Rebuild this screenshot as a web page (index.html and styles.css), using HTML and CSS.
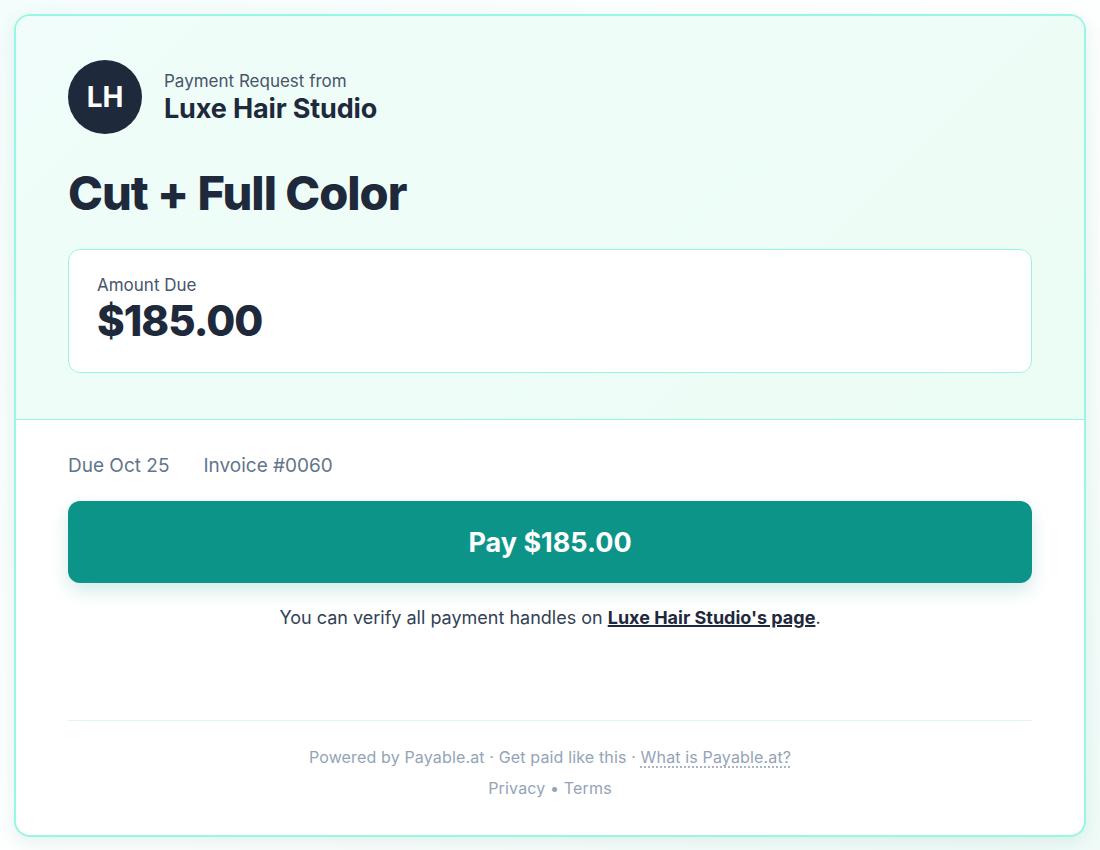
FILE: index.html
```html
<!DOCTYPE html>
<html>
<head>
  <title>Payment Request - Luxe Hair Studio</title>
  <link rel="stylesheet" href="styles.css">
</head>
<body>
  <div class="card">
    <div class="card-head">
      <div class="merchant">
        <div class="avatar">LH</div>
        <div class="merchant-info">
          <div class="merchant-label">Payment Request from</div>
          <div class="merchant-name">Luxe Hair Studio</div>
        </div>
      </div>

      <h1 class="title">Cut + Full Color</h1>

      <div class="amount-box">
        <div class="amount-label">Amount Due</div>
        <div class="amount">$185.00</div>
      </div>
    </div>

    <div class="card-body">
      <div class="meta">
        <span>Due Oct 25</span>
        <span>Invoice #0060</span>
      </div>

      <button class="pay-button">Pay $185.00</button>

      <p class="verify">You can verify all payment handles on <a href="#">Luxe Hair Studio's page</a>.</p>

      <div class="footer">
        <div>Powered by Payable.at · Get paid like this · <a href="#" class="what">What is Payable.at?</a></div>
        <div class="legal"><a href="#">Privacy</a> • <a href="#">Terms</a></div>
      </div>
    </div>
  </div>
</body>
</html>
```

FILE: styles.css
```css
body {
  font-family: Inter, "Noto Sans", sans-serif;
  margin: 0;
  padding: 14px;
  background: linear-gradient(135deg, #f3fdfb 0%, #ffffff 50%, #f0fbf8 100%);
  min-height: 850px;
  box-sizing: border-box;
  color: #1e293b;
}

.card {
  border: 2px solid #99f6e4;
  border-radius: 16px;
  background: #fff;
  overflow: hidden;
  box-shadow: 0 6px 18px rgba(15, 118, 110, 0.10);
}

.card-head {
  background: linear-gradient(135deg, #f0fdfa 0%, #ecfdf5 100%);
  border-bottom: 1px solid #99f6e4;
  padding: 44px 52px 46px;
}

.merchant {
  display: flex;
  align-items: center;
  gap: 22px;
}

.avatar {
  width: 74px;
  height: 74px;
  border-radius: 50%;
  background: #1e293b;
  color: #fff;
  font-size: 28px;
  font-weight: 700;
  display: flex;
  align-items: center;
  justify-content: center;
}

.merchant-info {
  padding-top: 1px;
}

.merchant-label {
  font-size: 17px;
  color: #475569;
  line-height: 20px;
  margin-bottom: 2px;
}

.merchant-name {
  font-size: 27px;
  font-weight: 700;
  line-height: 32px;
  letter-spacing: -0.15px;
}

.title {
  font-size: 47px;
  font-weight: 800;
  letter-spacing: -1px;
  line-height: 56px;
  margin: 31px 0 28px;
}

.amount-box {
  background: #fff;
  border: 1px solid #99f6e4;
  border-radius: 12px;
  padding: 23px 28px 27px;
}

.amount-label {
  font-size: 17px;
  color: #475569;
  line-height: 24px;
}

.amount {
  font-size: 42px;
  font-weight: 800;
  line-height: 48px;
  letter-spacing: -1px;
}

.card-body {
  padding: 34px 52px 36px;
}

.meta {
  display: flex;
  gap: 34px;
  font-size: 19px;
  color: #64748b;
  line-height: 24px;
}

.pay-button {
  display: block;
  width: 100%;
  height: 82px;
  margin-top: 23px;
  border: none;
  border-radius: 12px;
  background: #0d9488;
  color: #fff;
  font-family: inherit;
  font-size: 27px;
  font-weight: 700;
  cursor: pointer;
  box-shadow: 0 8px 18px rgba(13, 148, 136, 0.18);
}

.verify {
  text-align: center;
  font-size: 18px;
  color: #334155;
  line-height: 24px;
  margin: 23px 0 0;
}

.verify a {
  color: #1e293b;
  font-weight: 700;
  text-decoration: underline;
  text-decoration-thickness: 2px;
}

.footer {
  margin-top: 90px;
  border-top: 1px solid #dff5f2;
  padding-top: 25px;
  text-align: center;
  font-size: 16px;
  letter-spacing: 0.15px;
  color: #94a3b8;
  line-height: 22px;
}

.footer a {
  color: #94a3b8;
  text-decoration: none;
}

.footer a.what {
  text-decoration: underline dotted;
  text-underline-offset: 4px;
}

.legal {
  margin-top: 9px;
}
```
